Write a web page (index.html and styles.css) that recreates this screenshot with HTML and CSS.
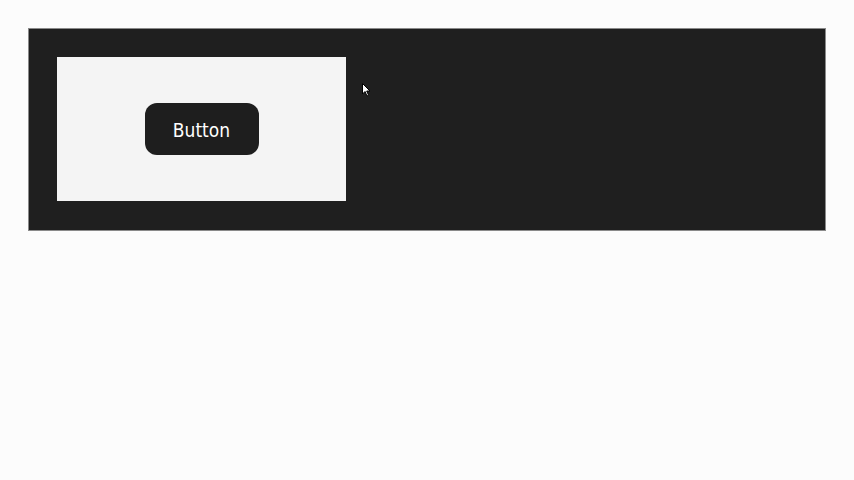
FILE: index.html
```html
<!DOCTYPE html>
<html lang="en">
<head>
    <meta charset="UTF-8">
    <title>Button</title>
    <link rel="stylesheet" href="styles.css">
</head>
<body>
<div class="stage">
    <div class="preview">
        <button class="btn">Button</button>
    </div>
    <svg class="cursor" width="10" height="14" viewBox="0 0 10 14">
        <path d="M0.5 0.5 L0.5 11 L3 8.5 L5 13 L6.6 12.3 L4.7 8 L8 8 Z" fill="#fff" stroke="#000" stroke-width="1"/>
    </svg>
</div>
</body>
</html>
```

FILE: styles.css
```css
body, html {
    margin: 0;
    background: #fcfcfc;
    font-family: "DejaVu Sans", Verdana, sans-serif;
}
body {
    padding: 28px;
}
.stage {
    position: relative;
    background: #1f1f1f;
    border: 1px solid #8a8a8a;
    width: 798px;
    height: 203px;
    padding: 28px;
    box-sizing: border-box;
}
.preview {
    width: 289px;
    height: 144px;
    background: #f4f4f4;
    display: flex;
    justify-content: center;
    align-items: center;
}
.btn {
    width: 114px;
    height: 52px;
    padding: 2px 0 0;
    background: #1e1e1e;
    color: #fff;
    border: none;
    border-radius: 12px;
    font-family: "DejaVu Sans Condensed", "DejaVu Sans", sans-serif;
    font-stretch: condensed;
    font-size: 19px;
}
.cursor {
    position: absolute;
    left: 333px;
    top: 54px;
}
```
